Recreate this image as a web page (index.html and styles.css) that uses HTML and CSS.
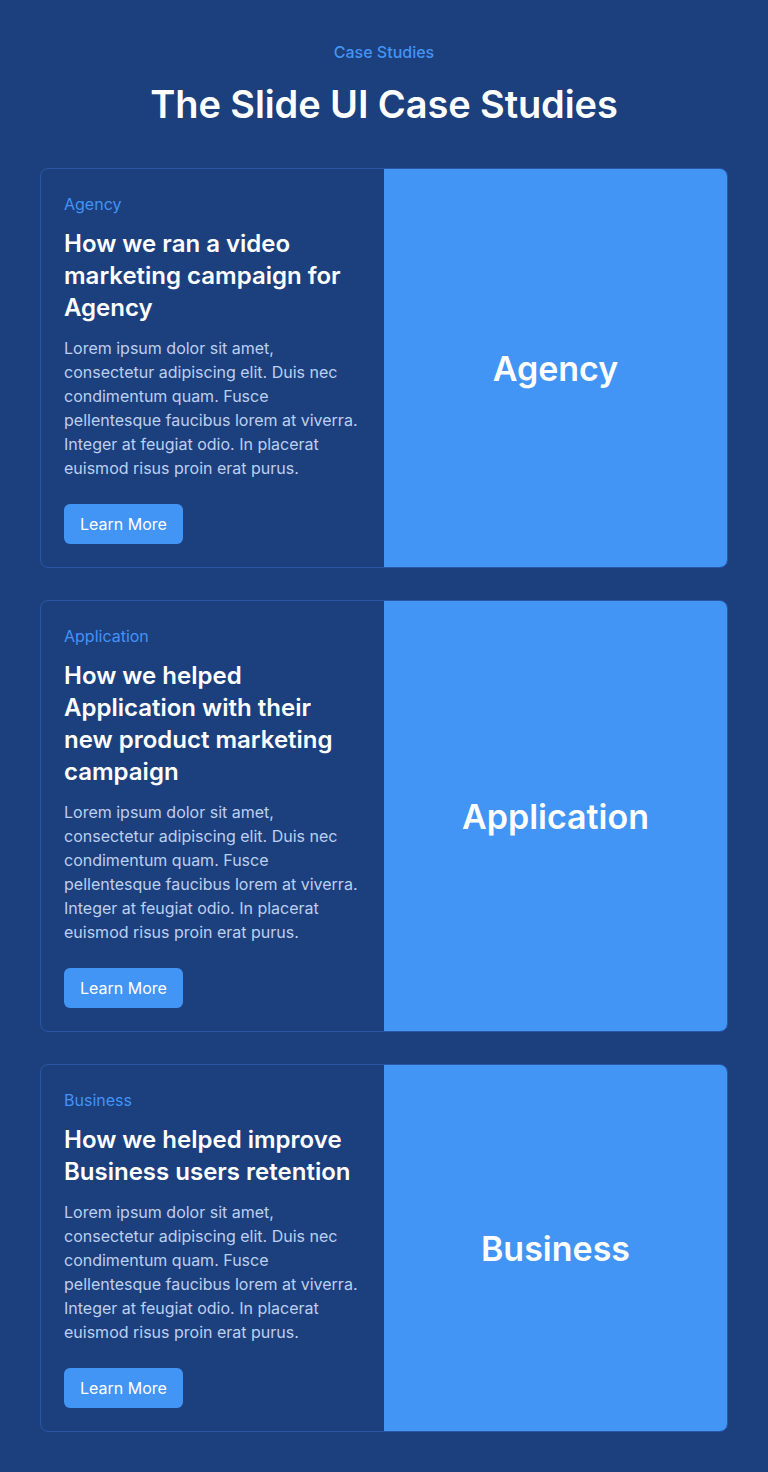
FILE: index.html
```html
<!DOCTYPE html>
<html lang="en">
<head>
<meta charset="utf-8">
<title>The Slide UI Case Studies</title>
<link rel="stylesheet" href="styles.css">
</head>
<body>
<main class="page">
  <header class="head">
    <p class="eyebrow">Case Studies</p>
    <h1 class="title">The Slide UI Case Studies</h1>
  </header>
  <section class="list">
    <article class="card">
      <div class="card-body">
        <p class="tag">Agency</p>
        <h2 class="card-title">How we ran a video marketing campaign for Agency</h2>
        <p class="text">Lorem ipsum dolor sit amet, consectetur adipiscing elit. Duis nec condimentum quam. Fusce pellentesque faucibus lorem at viverra. Integer at feugiat odio. In placerat euismod risus proin erat purus.</p>
        <a class="btn" href="#">Learn More</a>
      </div>
      <div class="card-media">Agency</div>
    </article>
    <article class="card">
      <div class="card-body">
        <p class="tag">Application</p>
        <h2 class="card-title">How we helped Application with their new product marketing campaign</h2>
        <p class="text">Lorem ipsum dolor sit amet, consectetur adipiscing elit. Duis nec condimentum quam. Fusce pellentesque faucibus lorem at viverra. Integer at feugiat odio. In placerat euismod risus proin erat purus.</p>
        <a class="btn" href="#">Learn More</a>
      </div>
      <div class="card-media">Application</div>
    </article>
    <article class="card">
      <div class="card-body">
        <p class="tag">Business</p>
        <h2 class="card-title">How we helped improve Business users retention</h2>
        <p class="text">Lorem ipsum dolor sit amet, consectetur adipiscing elit. Duis nec condimentum quam. Fusce pellentesque faucibus lorem at viverra. Integer at feugiat odio. In placerat euismod risus proin erat purus.</p>
        <a class="btn" href="#">Learn More</a>
      </div>
      <div class="card-media">Business</div>
    </article>
  </section>
</main>
</body>
</html>
```

FILE: styles.css
```css
* { box-sizing: border-box; }
html, body {
  margin: 0;
  padding: 0;
  background: #1c3f7e;
}
body {
  font-family: Inter, "Noto Sans", sans-serif;
  color: #ffffff;
}
.page {
  padding: 40px 40px 40px;
}
.head {
  text-align: center;
  margin-bottom: 40px;
}
.eyebrow {
  margin: 0;
  font-size: 16px;
  line-height: 24px;
  font-weight: 500;
  color: #4294f5;
}
.title {
  margin: 16px 0 0;
  font-size: 38px;
  line-height: 48px;
  font-weight: 600;
  letter-spacing: -0.1px;
  color: #ffffff;
}
.list {
  display: flex;
  flex-direction: column;
  gap: 32px;
}
.card {
  display: grid;
  grid-template-columns: 1fr 1fr;
  border: 1px solid #2c56a3;
  border-radius: 8px;
  overflow: hidden;
  background: #1c3f7e;
}
.card-body {
  padding: 23px;
  display: flex;
  flex-direction: column;
  align-items: flex-start;
}
.tag {
  margin: 0;
  font-size: 16px;
  line-height: 24px;
  color: #4294f5;
}
.card-title {
  margin: 12px 0 0;
  font-size: 24px;
  line-height: 32px;
  font-weight: 600;
  color: #ffffff;
}
.text {
  margin: 12px 0 0;
  font-size: 16px;
  line-height: 24px;
  color: #bcd0f0;
}
.btn {
  margin-top: 24px;
  display: inline-flex;
  align-items: center;
  justify-content: center;
  height: 40px;
  padding: 0 16px;
  border-radius: 6px;
  background: #4294f5;
  color: #ffffff;
  font-size: 16px;
  text-decoration: none;
}
.card-media {
  background: #4294f5;
  display: flex;
  align-items: center;
  justify-content: center;
  font-size: 34px;
  font-weight: 600;
  color: #ffffff;
}
```
